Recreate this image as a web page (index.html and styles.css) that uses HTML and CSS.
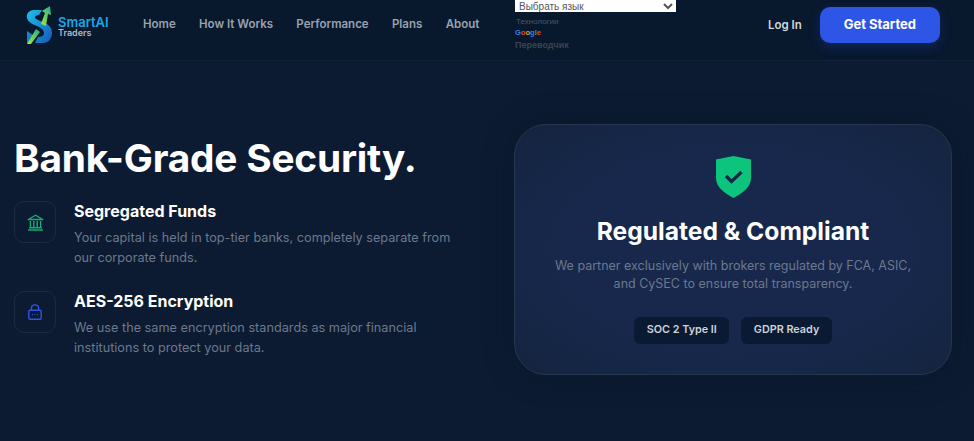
FILE: index.html
```html
<!DOCTYPE html>
<html lang="en">
<head>
    <meta charset="UTF-8">
    <meta name="viewport" content="width=device-width, initial-scale=1.0">
    <title>SmartAI Traders</title>
    <link rel="stylesheet" href="styles.css">
</head>
<body>
    <header class="navbar">
        <a class="logo" href="#">
            <svg class="logo-mark" viewBox="0 0 26 38" width="26" height="38">
                <defs>
                    <linearGradient id="logoBlue" x1="0" y1="0" x2="1" y2="1">
                        <stop offset="0" stop-color="#1fc0ea"/>
                        <stop offset="1" stop-color="#1657b8"/>
                    </linearGradient>
                    <linearGradient id="logoGreen" x1="0" y1="1" x2="1" y2="0">
                        <stop offset="0" stop-color="#a6e83c"/>
                        <stop offset="1" stop-color="#1fae8f"/>
                    </linearGradient>
                </defs>
                <path d="M16 4 L8 4 C3 4 0 8 1 12 C2 16 6 18 11 20 C15 22 18 24 18 27 C18 30 15 31 12 31 L9 37 L17 37 C23 37 26 32 26 27 C26 21 22 18 17 16 C12 14 9 13 9 11.5 C9 10 11 9 13 9 Z" fill="url(#logoBlue)"/>
                <path d="M1 25 L1 37 L6 37 L7 29 Z" fill="#1f7fc4"/>
                <path d="M1 38 L5 38 L14 26 L10 23 Z" fill="url(#logoGreen)"/>
                <path d="M15 18 L20 20 L22 8 L25 9 L24 0 L16 5 L19 7 Z" fill="url(#logoGreen)"/>
            </svg>
            <span class="logo-text">
                <span class="logo-name">SmartAI</span>
                <span class="logo-sub">Traders</span>
            </span>
        </a>
        <nav class="nav-links">
            <a href="#">Home</a>
            <a href="#">How It Works</a>
            <a href="#">Performance</a>
            <a href="#">Plans</a>
            <a href="#">About</a>
        </nav>
        <div class="translate">
            <select class="translate-select">
                <option>Выбрать язык</option>
            </select>
            <div class="translate-by">Технологии</div>
            <div class="translate-google"><span class="g-blue">G</span><span class="g-red">o</span><span class="g-yellow">o</span><span class="g-blue">g</span><span class="g-green">l</span><span class="g-red">e</span></div>
            <div class="translate-name">Переводчик</div>
        </div>
        <div class="nav-actions">
            <a class="login" href="#">Log In</a>
            <a class="btn-start" href="#">Get Started</a>
        </div>
    </header>

    <main class="hero">
        <section class="hero-left">
            <h1>Bank-Grade Security.</h1>
            <div class="feature">
                <div class="feature-icon">
                    <svg viewBox="0 0 16 16" width="17" height="17" fill="none" stroke="#10b070" stroke-width="1.3">
                        <path d="M1.2 5.2 L8 1.2 L14.8 5.2 Z" stroke-linejoin="round"/>
                        <path d="M3.2 6.5 V12.2 M6.4 6.5 V12.2 M9.6 6.5 V12.2 M12.8 6.5 V12.2 M2 13 H14 M1 15 H15"/>
                    </svg>
                </div>
                <div class="feature-body">
                    <h3>Segregated Funds</h3>
                    <p>Your capital is held in top-tier banks, completely separate from our corporate funds.</p>
                </div>
            </div>
            <div class="feature">
                <div class="feature-icon">
                    <svg viewBox="0 0 14 16" width="14" height="16" fill="none" stroke="#2f55e8" stroke-width="1.4">
                        <rect x="0.8" y="6.2" width="12.4" height="9" rx="1.2"/>
                        <path d="M3.4 6 V4.2 C3.4 2.2 5 0.9 7 0.9 C9 0.9 10.6 2.2 10.6 4.2 V6"/>
                        <path d="M4 10.7 H4.9 M6.6 10.7 H7.5 M9.2 10.7 H10.1" stroke-width="1.2"/>
                    </svg>
                </div>
                <div class="feature-body">
                    <h3>AES-256 Encryption</h3>
                    <p>We use the same encryption standards as major financial institutions to protect your data.</p>
                </div>
            </div>
        </section>

        <section class="card">
            <svg class="card-shield" viewBox="0 0 35 42" width="35" height="42">
                <path d="M17.5 0 L35 3.5 V22 C35 31 27 37 17.5 42 C8 37 0 31 0 22 V3.5 Z" fill="#0cc47c"/>
                <path d="M10 20 L15.5 25.5 L25.5 16" fill="none" stroke="#15264a" stroke-width="3.2"/>
            </svg>
            <h2>Regulated &amp; Compliant</h2>
            <p>We partner exclusively with brokers regulated by FCA, ASIC, and CySEC to ensure total transparency.</p>
            <div class="badges">
                <span class="badge">SOC 2 Type II</span>
                <span class="badge">GDPR Ready</span>
            </div>
        </section>
    </main>
</body>
</html>
```

FILE: styles.css
```css
* {
    box-sizing: border-box;
}

body {
    margin: 0;
    height: 441px;
    overflow: hidden;
    background-color: #0c1b31;
    color: #ffffff;
    font-family: 'Inter', 'Liberation Sans', sans-serif;
}

a {
    color: inherit;
    text-decoration: none;
}

/* Navbar */
.navbar {
    display: flex;
    align-items: flex-start;
    height: 61px;
    padding-left: 26px;
    background-color: #08182d;
    border-bottom: 1px solid #10233b;
}

.logo {
    display: flex;
    align-items: center;
    gap: 6px;
    width: 117px;
    margin-top: 6px;
}

.logo-text {
    display: flex;
    flex-direction: column;
    margin-top: 3px;
}

.logo-name {
    font-size: 13px;
    line-height: 12px;
    font-weight: 600;
    color: #16a9e6;
}

.logo-sub {
    font-size: 9px;
    line-height: 9px;
    font-weight: 600;
    color: #b3bac4;
}

.nav-links {
    display: flex;
    gap: 23.3px;
    width: 372px;
    margin-top: 16px;
    font-size: 11.5px;
    line-height: 16px;
    font-weight: 600;
    color: #9aa2ad;
    white-space: nowrap;
}

.translate {
    width: 161px;
}

.translate-select {
    display: block;
    width: 161px;
    height: 12px;
    padding: 0;
    border: none;
    border-radius: 0;
    background-color: #ffffff;
    color: #555555;
    font-family: 'Liberation Sans', sans-serif;
    font-size: 10px;
}

.translate-by {
    margin-top: 5px;
    margin-left: 1px;
    font-family: 'Liberation Sans', sans-serif;
    font-size: 8px;
    line-height: 9px;
    color: #4d5766;
}

.translate-google {
    margin-top: 1px;
    font-family: 'Liberation Sans', sans-serif;
    font-size: 7.5px;
    line-height: 11px;
    font-weight: 700;
}

.g-blue { color: #3f7fe8; }
.g-red { color: #d94a38; }
.g-yellow { color: #d9a520; }
.g-green { color: #3aa757; }

.translate-name {
    margin-top: 2px;
    font-family: 'Liberation Sans', sans-serif;
    font-size: 9px;
    line-height: 11px;
    font-weight: 700;
    color: #3a4452;
}

.nav-actions {
    display: flex;
    align-items: center;
    gap: 18px;
    margin-left: 92px;
    margin-top: 7px;
}

.login {
    font-size: 11.5px;
    font-weight: 600;
    color: #d3d7dc;
}

.btn-start {
    width: 120px;
    height: 36px;
    border-radius: 10px;
    background-color: #2d55e6;
    box-shadow: 0 4px 12px rgba(45, 85, 230, 0.25);
    font-size: 13px;
    line-height: 34px;
    font-weight: 700;
    text-align: center;
}

/* Hero */
.hero {
    display: flex;
    align-items: flex-start;
    padding: 63px 22px 0 14px;
}

.hero-left {
    width: 500px;
    flex-shrink: 0;
}

h1 {
    margin: 8px 0 17px;
    font-size: 38.8px;
    line-height: 52px;
    font-weight: 700;
    letter-spacing: -0.2px;
}

.feature {
    display: flex;
    gap: 18px;
    margin-bottom: 23px;
}

.feature-icon {
    display: flex;
    align-items: center;
    justify-content: center;
    width: 42px;
    height: 42px;
    flex-shrink: 0;
    border: 1px solid #1a2a42;
    border-radius: 10px;
}

.feature-body h3 {
    margin: 0 0 7px;
    font-size: 16px;
    line-height: 20px;
    font-weight: 700;
}

.feature-body p {
    width: 390px;
    margin: 0;
    font-size: 12.7px;
    line-height: 20px;
    color: #6b788d;
}

/* Right card */
.card {
    display: flex;
    flex-direction: column;
    align-items: center;
    width: 438px;
    height: 251px;
    padding-top: 31px;
    border: 1px solid #26364c;
    border-radius: 32px;
    background: radial-gradient(ellipse at center, #17284c 55%, #14243f 100%);
    box-shadow: 0 0 30px rgba(8, 20, 40, 0.35);
    text-align: center;
}

h2 {
    margin: 18px 0 11px;
    font-size: 24.6px;
    line-height: 30px;
    font-weight: 700;
}

.card p {
    width: 380px;
    margin: 0;
    font-size: 12.5px;
    line-height: 18px;
    color: #6b788d;
}

.badges {
    display: flex;
    gap: 12px;
    margin-top: 24px;
}

.badge {
    padding: 0 12.5px;
    height: 27px;
    border-radius: 6px;
    background-color: #0b1a33;
    font-size: 10.8px;
    line-height: 26px;
    font-weight: 600;
    color: #cdd2d9;
}
```
